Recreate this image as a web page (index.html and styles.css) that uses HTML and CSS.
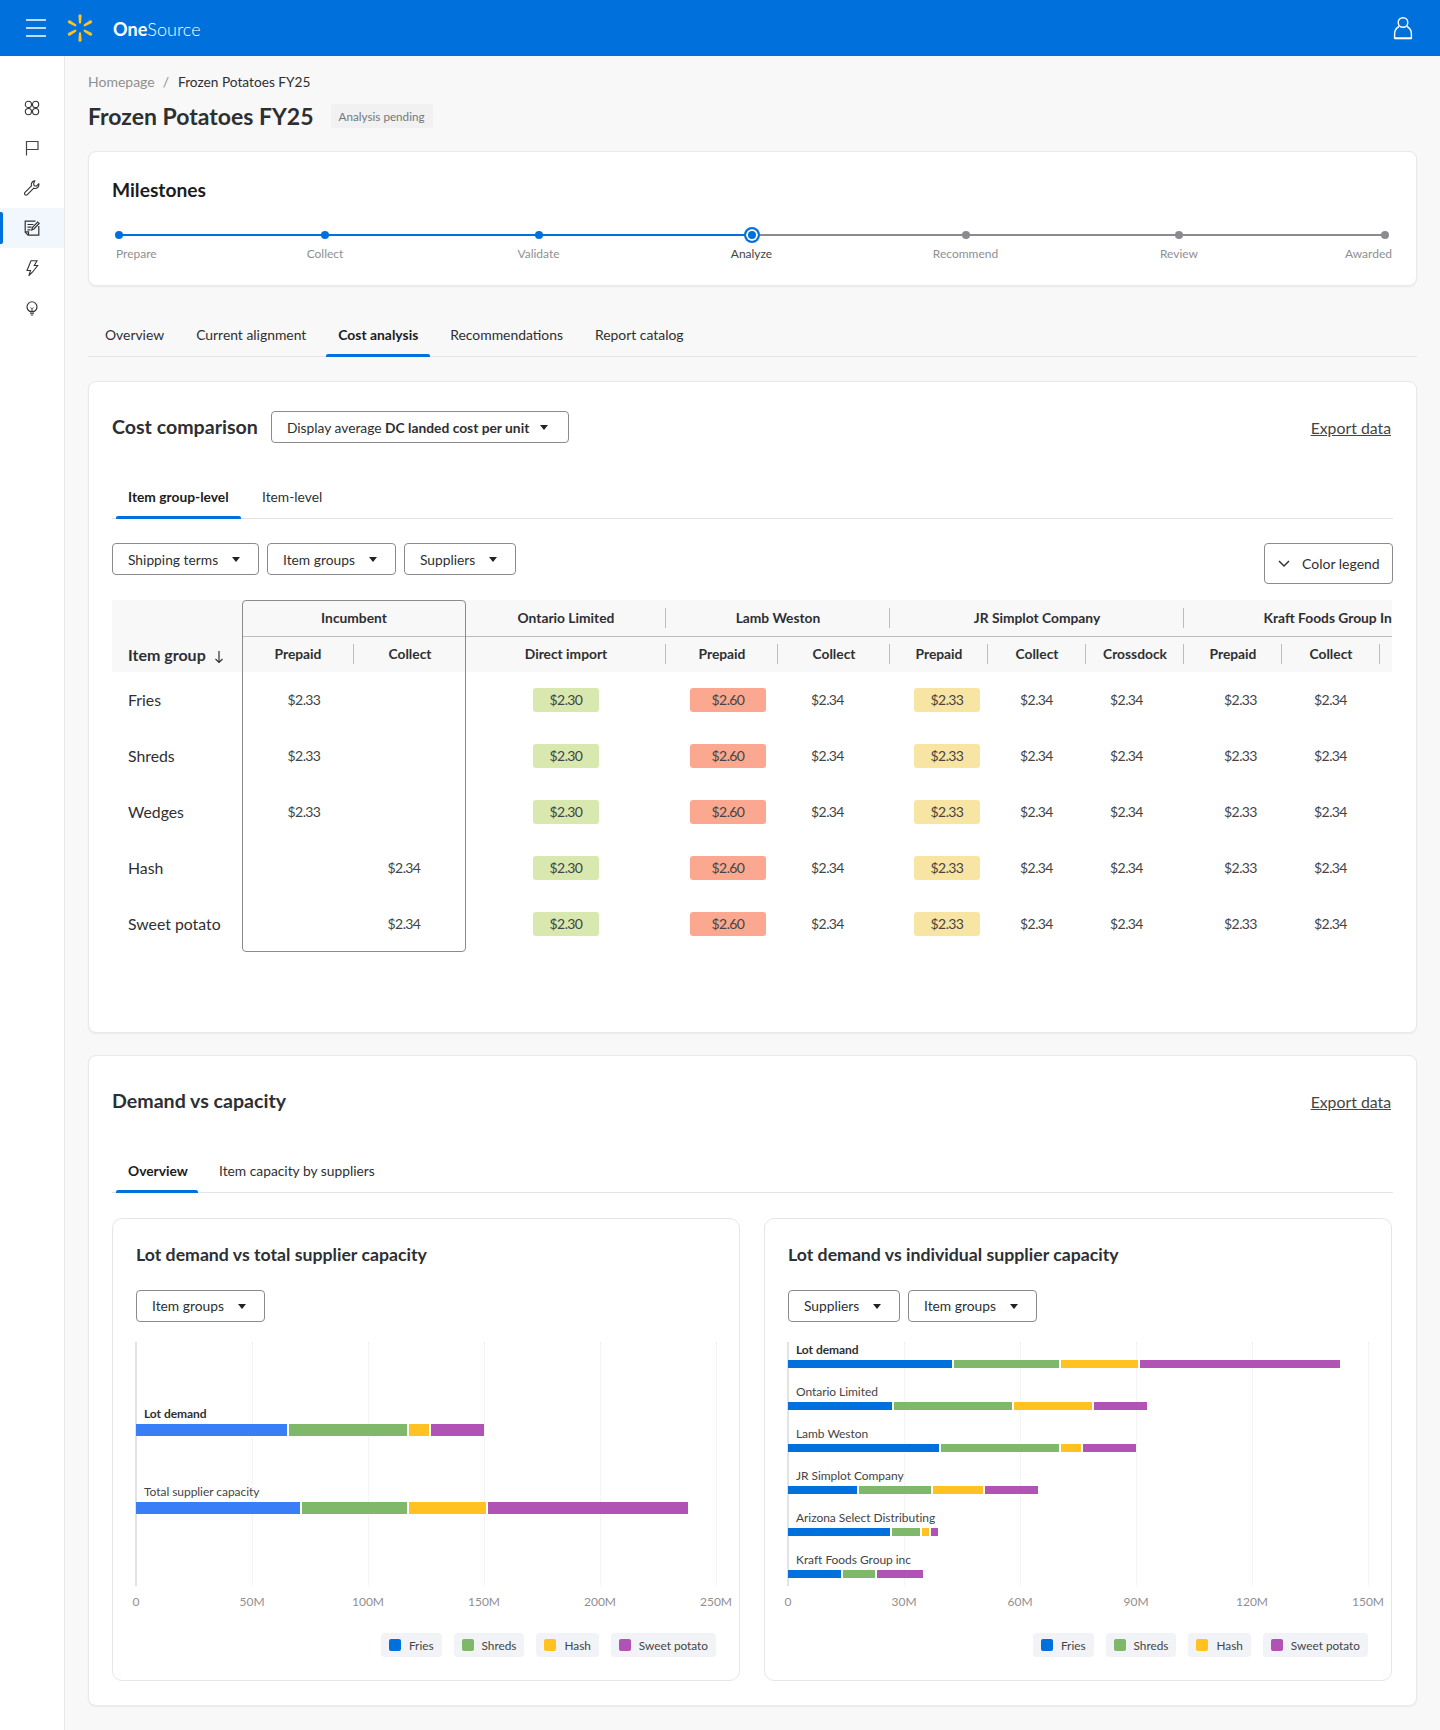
FILE: index.html
```html
<!DOCTYPE html>
<html lang="en">
<head>
<meta charset="utf-8">
<title>Frozen Potatoes FY25</title>
<link rel="stylesheet" href="styles.css">
</head>
<body>
<header class="topbar">
  <svg class="burger" width="20" height="18" viewBox="0 0 20 18"><path d="M0 1h20M0 9h20M0 17h20" stroke="#fff" stroke-width="1.4" fill="none"/></svg>
  <svg class="spark" width="28" height="28" viewBox="0 0 28 28" fill="#ffc220">
    <path d="M12.400 1.800a1.600 1.600 0 0 1 3.200 0l-.5 6.800a1.100 1.100 0 0 1-2.200 0z"/>
    <path d="M12.400 1.800a1.600 1.600 0 0 1 3.200 0l-.5 6.800a1.100 1.100 0 0 1-2.200 0z" transform="rotate(60 14 14)"/>
    <path d="M12.400 1.800a1.600 1.600 0 0 1 3.200 0l-.5 6.800a1.100 1.100 0 0 1-2.200 0z" transform="rotate(120 14 14)"/>
    <path d="M12.400 1.800a1.600 1.600 0 0 1 3.200 0l-.5 6.800a1.100 1.100 0 0 1-2.200 0z" transform="rotate(180 14 14)"/>
    <path d="M12.400 1.800a1.600 1.600 0 0 1 3.200 0l-.5 6.800a1.100 1.100 0 0 1-2.200 0z" transform="rotate(240 14 14)"/>
    <path d="M12.400 1.800a1.600 1.600 0 0 1 3.200 0l-.5 6.800a1.100 1.100 0 0 1-2.200 0z" transform="rotate(300 14 14)"/>
  </svg>
  <div class="brand"><b>One</b>Source</div>
  <svg class="user" width="20" height="24" viewBox="0 0 20 24" fill="none" stroke="#fff" stroke-width="1.4"><circle cx="10" cy="6.5" r="4.8"/><path d="M6 10.500C3 12 1.600 15 1.600 18v4.300h16.800V18c0-3-1.400-6-4.400-7.500"/><path d="M1.600 22.400h16.800" stroke-width="1.8"/></svg>
</header>

<div class="shell">
  <nav class="sidenav">
    <a class="navitem"><svg width="16" height="16" viewBox="0 0 16 16" fill="none" stroke="#333" stroke-width="1.100"><circle cx="4.400" cy="4.400" r="3.100"/><circle cx="11.600" cy="4.400" r="3.100"/><circle cx="4.400" cy="11.600" r="3.100"/><circle cx="11.600" cy="11.600" r="3.100"/></svg></a>
    <a class="navitem"><svg width="16" height="16" viewBox="0 0 16 16" fill="none" stroke="#444" stroke-width="1.200"><path d="M2.500 15.500V1.500H14V9.500H2.500"/></svg></a>
    <a class="navitem"><svg width="16" height="16" viewBox="0 0 16 16" fill="none" stroke="#333" stroke-width="1.100"><path d="M10.700.900a3.800 3.800 0 0 0-3.200 5L1 12.400a1.600 1.600 0 0 0 2.300 2.300l6.500-6.500a3.800 3.800 0 0 0 5-4.400l-2.500 2.400-2.200-.5-.5-2.200z"/></svg></a>
    <a class="navitem active"><svg width="16" height="16" viewBox="0 0 16 16" fill="none" stroke="#333" stroke-width="1.200"><path d="M11.500 1.200H1.200v11l3 3h10.600V6"/><path d="M1.500 11.800h3v3.200"/><path d="M3.500 4.500h6M3.500 7.200h4M3.500 9.800h3"/><path d="M7.800 10l.6-2.500 5.300-5.500 1.500 1.500-5.300 5.500z" fill="#fff"/></svg></a>
    <a class="navitem"><svg width="16" height="16" viewBox="0 0 16 16" fill="none" stroke="#333" stroke-width="1.100"><path d="M7 .800h6L10.300 5.500h3.400L8.600 12 5 15.500l1.500-5H3z"/></svg></a>
    <a class="navitem"><svg width="16" height="16" viewBox="0 0 16 16" fill="none" stroke="#333" stroke-width="1.100"><path d="M5.800 11.400C4 10.500 3 8.800 3 6.800a5 5 0 0 1 10 0c0 2-1 3.700-2.800 4.600z"/><path d="M6 13.200h4M6.800 15h2.400" stroke-width="1.200"/><path d="M6.300 7.500 8 9l1.700-1.500M8 9v2.400" stroke-width=".8"/></svg></a>
  </nav>

  <main class="main">
    <div class="crumbs"><span class="crumb-muted">Homepage</span><span class="crumb-sep">/</span><span class="crumb-cur">Frozen Potatoes FY25</span></div>
    <div class="titlerow"><h1>Frozen Potatoes FY25</h1><span class="badge">Analysis pending</span></div>

    <section class="card milestones">
      <h2 class="ms-title">Milestones</h2>
      <div class="steps">
        <div class="step first done"><i class="dot"></i><span>Prepare</span></div>
        <div class="step done"><i class="dot"></i><span>Collect</span></div>
        <div class="step done"><i class="dot"></i><span>Validate</span></div>
        <div class="step current"><i class="dot"></i><span>Analyze</span></div>
        <div class="step"><i class="dot"></i><span>Recommend</span></div>
        <div class="step"><i class="dot"></i><span>Review</span></div>
        <div class="step last"><i class="dot"></i><span>Awarded</span></div>
      </div>
    </section>

    <div class="pagetabs">
      <a>Overview</a><a>Current alignment</a><a class="on">Cost analysis</a><a>Recommendations</a><a>Report catalog</a>
    </div>

    <section class="card cost">
      <div class="cardhead">
        <h2>Cost comparison</h2>
        <button class="drop wide">Display average&nbsp;<b>DC landed cost per unit</b><i class="caret"></i></button>
        <a class="export">Export data</a>
      </div>
      <div class="subtabs">
        <a class="on tab-a">Item group-level</a><a>Item-level</a>
      </div>
      <div class="filterrow">
        <button class="drop w147">Shipping terms<i class="caret"></i></button>
        <button class="drop w129">Item groups<i class="caret"></i></button>
        <button class="drop w112">Suppliers<i class="caret"></i></button>
        <button class="legendbtn"><svg width="12" height="8" viewBox="0 0 12 8" fill="none" stroke="#333" stroke-width="1.500"><path d="M1 1l5 5 5-5"/></svg>Color legend</button>
      </div>

      <div class="tablewrap">
        <div class="incumbent-box"></div>
        <div class="thead">
          <div class="hgrid row1">
            <div class="hc blank"></div>
            <div class="hc s2">Incumbent</div>
            <div class="hc sep">Ontario Limited</div>
            <div class="hc s2 sep">Lamb Weston</div>
            <div class="hc s3 sep">JR Simplot Company</div>
            <div class="hc s3 kraft">Kraft Foods Group Inc</div>
          </div>
          <div class="hgrid row2">
            <div class="hc itemgroup">Item group<svg width="10" height="14" viewBox="0 0 10 14" fill="none" stroke="#333" stroke-width="1.200"><path d="M5 1v11.500M1.500 9 5 12.500 8.500 9"/></svg></div>
            <div class="hc sep2">Prepaid</div><div class="hc">Collect</div>
            <div class="hc sep">Direct import</div>
            <div class="hc sep">Prepaid</div><div class="hc sep">Collect</div>
            <div class="hc sep">Prepaid</div><div class="hc sep">Collect</div><div class="hc sep">Crossdock</div>
            <div class="hc sep">Prepaid</div><div class="hc sep">Collect</div><div class="hc"></div>
          </div>
        </div>
        <div class="bgrid"><div class="rowlabel">Fries</div><span>$2.33</span><span></span><span class="g">$2.30</span><span class="r">$2.60</span><span>$2.34</span><span class="y">$2.33</span><span>$2.34</span><span>$2.34</span><span>$2.33</span><span>$2.34</span></div>
        <div class="bgrid"><div class="rowlabel">Shreds</div><span>$2.33</span><span></span><span class="g">$2.30</span><span class="r">$2.60</span><span>$2.34</span><span class="y">$2.33</span><span>$2.34</span><span>$2.34</span><span>$2.33</span><span>$2.34</span></div>
        <div class="bgrid"><div class="rowlabel">Wedges</div><span>$2.33</span><span></span><span class="g">$2.30</span><span class="r">$2.60</span><span>$2.34</span><span class="y">$2.33</span><span>$2.34</span><span>$2.34</span><span>$2.33</span><span>$2.34</span></div>
        <div class="bgrid"><div class="rowlabel">Hash</div><span></span><span>$2.34</span><span class="g">$2.30</span><span class="r">$2.60</span><span>$2.34</span><span class="y">$2.33</span><span>$2.34</span><span>$2.34</span><span>$2.33</span><span>$2.34</span></div>
        <div class="bgrid"><div class="rowlabel">Sweet potato</div><span></span><span>$2.34</span><span class="g">$2.30</span><span class="r">$2.60</span><span>$2.34</span><span class="y">$2.33</span><span>$2.34</span><span>$2.34</span><span>$2.33</span><span>$2.34</span></div>
      </div>
    </section>

    <section class="card demand">
      <div class="cardhead demand-head">
        <h2>Demand vs capacity</h2>
        <a class="export">Export data</a>
      </div>
      <div class="subtabs">
        <a class="on tab-b">Overview</a><a>Item capacity by suppliers</a>
      </div>
      <div class="charts">
        <article class="chartcard">
          <h3>Lot demand vs total supplier capacity</h3>
          <div class="chartfilters"><button class="drop w129">Item groups<i class="caret"></i></button></div>
          <div class="plot plot-a">
            <div class="gridlines"><i></i><i></i><i></i><i></i><i></i></div>
            <div class="barrow"><div class="barlabel strong">Lot demand</div><div class="bar tall"><b class="c-bright" style="width:151px"></b><b class="c-green" style="width:118px"></b><b class="c-yellow" style="width:20px"></b><b class="c-purple" style="width:53px"></b></div></div>
            <div class="barrow"><div class="barlabel">Total supplier capacity</div><div class="bar tall"><b class="c-bright" style="width:164px"></b><b class="c-green" style="width:105px"></b><b class="c-yellow" style="width:77px"></b><b class="c-purple" style="width:200px"></b></div></div>
          </div>
          <div class="ticks"><span>0</span><span>50M</span><span>100M</span><span>150M</span><span>200M</span><span>250M</span></div>
          <div class="legend"><span class="chip"><i class="c-blue"></i>Fries</span><span class="chip"><i class="c-green"></i>Shreds</span><span class="chip"><i class="c-yellow"></i>Hash</span><span class="chip"><i class="c-purple"></i>Sweet potato</span></div>
        </article>
        <article class="chartcard">
          <h3>Lot demand vs individual supplier capacity</h3>
          <div class="chartfilters"><button class="drop w112">Suppliers<i class="caret"></i></button><button class="drop w129">Item groups<i class="caret"></i></button></div>
          <div class="plot plot-b">
            <div class="gridlines"><i></i><i></i><i></i><i></i><i></i></div>
            <div class="barrow"><div class="barlabel strong">Lot demand</div><div class="bar"><b class="c-blue" style="width:164px"></b><b class="c-green" style="width:105px"></b><b class="c-yellow" style="width:77px"></b><b class="c-purple" style="width:200px"></b></div></div>
            <div class="barrow"><div class="barlabel">Ontario Limited</div><div class="bar"><b class="c-blue" style="width:104px"></b><b class="c-green" style="width:118px"></b><b class="c-yellow" style="width:78px"></b><b class="c-purple" style="width:53px"></b></div></div>
            <div class="barrow"><div class="barlabel">Lamb Weston</div><div class="bar"><b class="c-blue" style="width:151px"></b><b class="c-green" style="width:118px"></b><b class="c-yellow" style="width:20px"></b><b class="c-purple" style="width:53px"></b></div></div>
            <div class="barrow"><div class="barlabel">JR Simplot Company</div><div class="bar"><b class="c-blue" style="width:69px"></b><b class="c-green" style="width:72px"></b><b class="c-yellow" style="width:50px"></b><b class="c-purple" style="width:53px"></b></div></div>
            <div class="barrow"><div class="barlabel">Arizona Select Distributing</div><div class="bar"><b class="c-blue" style="width:102px"></b><b class="c-green" style="width:28px"></b><b class="c-yellow" style="width:7px"></b><b class="c-purple" style="width:7px"></b></div></div>
            <div class="barrow"><div class="barlabel">Kraft Foods Group inc</div><div class="bar"><b class="c-blue" style="width:53px"></b><b class="c-green" style="width:32px"></b><b class="c-purple" style="width:46px"></b></div></div>
          </div>
          <div class="ticks"><span>0</span><span>30M</span><span>60M</span><span>90M</span><span>120M</span><span>150M</span></div>
          <div class="legend"><span class="chip"><i class="c-blue"></i>Fries</span><span class="chip"><i class="c-green"></i>Shreds</span><span class="chip"><i class="c-yellow"></i>Hash</span><span class="chip"><i class="c-purple"></i>Sweet potato</span></div>
        </article>
      </div>
    </section>
  </main>
</div>
</body>
</html>
```
FILE: styles.css
```css
* { box-sizing: border-box; }
html, body { margin: 0; padding: 0; }
body { font-family: Lato, "Open Sans", sans-serif; background: #f8f8f8; color: #2e2f32; font-size: 14px; height: 1730px; overflow: hidden; }
h1, h2, h3 { margin: 0; }
button { font-family: inherit; }

.topbar { height: 56px; background: #0071dc; display: flex; align-items: center; padding: 0 27px 0 26px; }
.burger { margin-right: 20px; }
.spark { margin-right: 19px; }
.brand { color: #fff; font-size: 18px; letter-spacing: .05px; font-weight: 300; padding-top: 2px; }
.brand b { font-weight: 700; }
.user { margin-left: auto; }

.shell { display: flex; height: 1674px; }
.sidenav { width: 65px; flex: none; background: #fff; border-right: 1px solid #e8e8e8; padding-top: 32px; }
.navitem { height: 40px; display: flex; align-items: center; justify-content: center; position: relative; }
.navitem.active { background: #f2f7fe; }
.navitem.active::before { content: ""; position: absolute; left: 0; top: 4px; bottom: 4px; width: 3px; background: #0071dc; border-radius: 0 2px 2px 0; }

.main { flex: 1; min-width: 0; padding: 18px 23px 24px 23px; }
.crumbs { height: 16px; line-height: 16px; display: flex; font-size: 14px; color: #2e2f32; }
.crumb-muted { color: #8f8f8f; }
.crumb-sep { color: #8f8f8f; margin: 0 9px 0 8px; }
.crumb-cur { font-size: 13.7px; }
.titlerow { display: flex; align-items: center; height: 30px; margin-top: 11px; }
h1 { font-size: 23px; font-weight: 700; color: #2e2f32; }
.badge { margin-left: 17px; height: 24px; line-height: 24px; padding: 0 8px; background: #f1f1f1; color: #74767c; font-size: 11.700px; border-radius: 2px; }

.card { background: #fff; border: 1px solid #e9e9e9; border-radius: 8px; box-shadow: 0 1px 2px rgba(0,0,0,.06); }
.milestones { margin-top: 20px; height: 135px; padding: 26px 24px 0 23px; }
.ms-title { font-size: 19.200px; line-height: 24px; font-weight: 700; color: #1c1c1c; }

.steps { display: grid; grid-template-columns: 103px 214px 213px 213px 215px 212px 107px; margin-top: 25px; margin-left: 3px;
  background: linear-gradient(#0071dc, #0071dc) 4px 7px / 632px 2px no-repeat, linear-gradient(#8b8b8f, #8b8b8f) 636px 7px / 634px 2px no-repeat; }
.step { display: flex; flex-direction: column; align-items: center; font-size: 12px; color: #8f8f8f; }
.step .dot { width: 8px; height: 8px; border-radius: 50%; background: #8b8b8f; margin: 4px 0; }
.step span { margin-top: 3px; line-height: 16px; }
.step.done .dot { background: #0071dc; }
.step.first { align-items: flex-start; }
.step.first span { margin-left: 1px; }
.step.last { align-items: flex-end; }
.step.last .dot { margin-right: 3px; }
.step.current { color: #444; }
.step.current .dot { width: 16px; height: 16px; margin: 0; background: #0071dc; border: 2px solid #0071dc; box-shadow: inset 0 0 0 2px #fff; }
.step.current span { margin-top: 3px; }

.pagetabs { display: flex; height: 39px; margin-top: 32px; border-bottom: 1px solid #e3e3e3; padding-left: 5px; }
.pagetabs a { padding: 0 12px; margin-right: 8px; line-height: 34px; font-size: 13.900px; color: #2e2f32; position: relative; }
.pagetabs a.on { font-weight: 700; color: #1c1c1c; }
.pagetabs a.on::after { content: ""; position: absolute; left: 0; right: 0; bottom: -1px; height: 3px; background: #0071dc; border-radius: 2px 2px 0 0; }

.cost { margin-top: 24px; height: 652px; padding: 29px 23px 0; }
.cardhead { display: flex; align-items: center; height: 32px; }
.cardhead h2 { font-size: 19.600px; font-weight: 700; color: #2e2f32; margin-right: 13px; padding-bottom: 2px; }
.export { margin-left: auto; margin-right: 2px; margin-top: 1px; font-size: 15.800px; text-decoration: underline; color: #444; }

.drop { display: inline-flex; align-items: center; height: 32px; padding: 0 15px; border: 1px solid #8b8b8f; border-radius: 4px; background: #fff; font-size: 13.800px; color: #2e2f32; white-space: nowrap; }
.drop b { font-weight: 700; }
.caret { width: 0; height: 0; border-left: 4px solid transparent; border-right: 4px solid transparent; border-top: 5px solid #222; margin-left: auto; }
.wide { width: 298px; padding-right: 20px; }
.w147 { width: 147px; padding-right: 18px; }
.w129 { width: 129px; padding-right: 18px; }
.w112 { width: 112px; padding-right: 18px; }

.subtabs { display: flex; height: 48px; margin-top: 28px; border-bottom: 1px solid #e3e3e3; }
.subtabs a { line-height: 52px; height: 47px; font-size: 13.800px; color: #2e2f32; position: relative; white-space: nowrap; }
.subtabs a.on { font-weight: 700; color: #1c1c1c; margin-left: 4px; padding: 0 12px; margin-right: 21px; }
.subtabs a.on::after { content: ""; position: absolute; left: 0; right: 0; bottom: -1px; height: 3px; background: #0071dc; border-radius: 2px 2px 0 0; }
.subtabs a.tab-a { width: 125px; }
.subtabs a.tab-b { width: 82px; }

.filterrow { display: flex; gap: 8px; margin-top: 24px; height: 41px; }
.legendbtn { margin-left: auto; width: 129px; height: 41px; padding: 0 0 0 13px; display: flex; align-items: center; gap: 12px; background: #fff; border: 1px solid #8b8b8f; border-radius: 4px; font-size: 14px; color: #2e2f32; }

.tablewrap { position: relative; margin-top: 16px; width: 1280px; height: 353px; overflow: hidden; }
.incumbent-box { position: absolute; left: 130px; top: 0; width: 224px; height: 352px; border: 1px solid #8b8b8f; border-radius: 4px; z-index: 2; pointer-events: none; }
.thead { background: #f8f8f8; width: 1280px; overflow: hidden; }
.hgrid { display: grid; grid-template-columns: 130px 112px 112px 200px 112px 112px 98px 98px 98px 98px 98px 98px; width: 1370px; }
.row1 { height: 37px; }
.row2 { height: 35px; }
.row1 .hc { border-bottom: 1px solid #bdbdbd; }
.row1 .blank { border-bottom: 0; }
.hc { display: flex; align-items: center; justify-content: center; padding-bottom: 2px; font-size: 13.800px; font-weight: 700; color: #2e2f32; position: relative; white-space: nowrap; }
.s2 { grid-column: span 2; }
.s3 { grid-column: span 3; }
.hc.sep::after, .hc.sep2::after { content: ""; position: absolute; right: 0; top: 8px; height: 20px; width: 1px; background: #bdbdbd; }
.row2 .hc.sep::after, .row2 .hc.sep2::after { top: 7px; }
.hc.itemgroup { justify-content: flex-start; padding-left: 16px; padding-top: 0; padding-bottom: 1px; font-size: 16px; gap: 8px; }
.hc.itemgroup svg { margin-top: 5px; }

.bgrid { display: grid; grid-template-columns: 130px 124px 76px 248px 76px 123px 116px 63px 117px 111px 69px; height: 56px; align-items: center; }
.bgrid span { justify-self: center; font-size: 14px; letter-spacing: -.6px; color: #444; line-height: 24px; }
.rowlabel { padding-left: 16px; padding-bottom: 2px; font-size: 15.800px; color: #2e2f32; }
.bgrid .g, .bgrid .r, .bgrid .y { height: 24px; text-align: center; border-radius: 3px; }
.g { width: 66px; background: #d9e8ae; }
.r { width: 76px; background: #fca78f; }
.y { width: 66px; background: #f8e5a4; }

.demand { margin-top: 22px; height: 651px; padding: 29px 23px 0; }
.demand-head h2 { margin-right: 0; }
.demand .subtabs { margin-top: 28px; }
.charts { display: flex; justify-content: space-between; margin-top: 25px; margin-right: 1px; }
.chartcard { width: 628px; height: 463px; background: #fff; border: 1px solid #e6e6e6; border-radius: 10px; padding: 24px 23px 0; position: relative; }
.chartcard h3 { font-size: 17.700px; font-weight: 700; line-height: 24px; color: #2e2f32; }
.chartfilters { display: flex; gap: 8px; margin-top: 23px; }
.chartfilters .drop { padding-bottom: 2px; }
.chartfilters .caret { margin-top: 2px; }

.plot { position: relative; margin-top: 20px; height: 244px; border-left: 2px solid #e3e3e3; margin-left: -1px; }
.plot-a { padding-top: 64px; }
.plot-a .barrow + .barrow { margin-top: 48px; }
.plot-b .barrow + .barrow { margin-top: 16px; }
.gridlines { position: absolute; inset: 0; display: flex; }
.gridlines i { flex: 0 0 116px; border-right: 1px dotted #ececec; }
.barrow { position: relative; }
.barlabel { height: 16px; line-height: 16px; font-size: 12px; color: #444; padding-left: 7px; white-space: nowrap; letter-spacing: -.05px; }
.barlabel.strong { font-weight: 700; color: #2e2f32; }
.bar { display: flex; gap: 2px; height: 8px; margin-top: 2px; margin-left: -1px; }
.bar.tall { height: 12px; }
.bar b { display: block; height: 100%; }
.c-blue { background: #0071dc; }
.c-bright { background: #377ef7; }
.c-green { background: #7fb86a; }
.c-yellow { background: #ffc220; }
.c-purple { background: #b153b4; }

.ticks { display: flex; margin-left: -58px; margin-top: 8px; width: 696px; }
.ticks span { flex: 0 0 116px; text-align: center; font-size: 12px; line-height: 16px; color: #8f8f8f; }
.legend { display: flex; justify-content: flex-end; gap: 12px; margin-top: 23px; }
.chip { display: flex; align-items: center; height: 24px; padding: 0 8px; gap: 8px; background: #f2f3f7; border-radius: 4px; font-size: 11.800px; color: #444; }
.chip i { width: 12px; height: 12px; border-radius: 2px; }
```
